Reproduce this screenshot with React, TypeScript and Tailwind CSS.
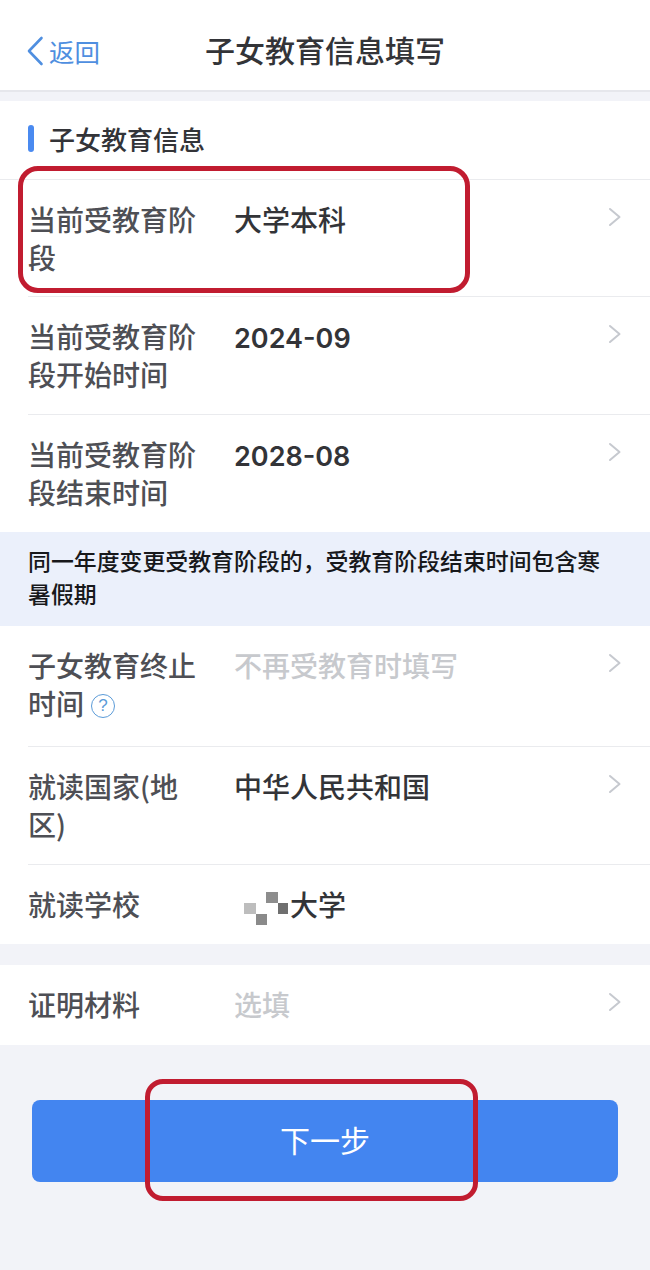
import React from 'react';

const FONT = "font-['Noto_Sans_CJK_SC','Noto_Sans',sans-serif]";

const Chevron = () => (
  <svg width="14" height="20" viewBox="0 0 14 20" fill="none" className="shrink-0">
    <path d="M2 2l9.5 8L2 18" stroke="#c6c9cf" strokeWidth="2" strokeLinecap="round" strokeLinejoin="round" />
  </svg>
);

const HelpIcon = () => (
  <span className="inline-flex ml-[7px] w-[24px] h-[24px] rounded-full border-[1.5px] border-[#5b9bd8] items-center justify-center align-[4px] text-[17px] leading-none text-[#5b9bd8] font-['Liberation_Sans',sans-serif]">
    ?
  </span>
);

// mosaic over the school name
const Mosaic = () => (
  <div className="grid grid-cols-[12px_10px_12px_10px] grid-rows-[11px_11px_11px] w-[54px] h-[33px] pl-[10px] mt-[7px] shrink-0 box-content">
    <div className="col-start-3 row-start-1 bg-[#8d8d8d]" />
    <div className="col-start-1 row-start-2 bg-[#bdbdbd]" />
    <div className="col-start-4 row-start-2 bg-[#6f6f6f]" />
    <div className="col-start-2 col-end-4 row-start-3 w-[11px] bg-[#8a8a8a]" />
  </div>
);

const Digits = ({ children }: { children: React.ReactNode }) => (
  <span className="font-['Inter',sans-serif] font-semibold text-[27px]">{children}</span>
);

interface RowProps {
  label: React.ReactNode;
  value: React.ReactNode;
  height: string;
  placeholder?: boolean;
  arrow?: boolean;
  border?: boolean;
}

const Row: React.FC<RowProps> = ({ label, value, height, placeholder, arrow = true, border = true }) => (
  <div className="pl-[28px]">
    <div className={`flex items-start pt-[20px] pr-[28px] ${height} ${border ? 'border-b border-[#eaebee]' : ''}`}>
      <div className="w-[206px] shrink-0 pr-[35px] text-[28px] leading-[38px] text-[#4e4f55] font-medium">{label}</div>
      <div className={`flex-1 text-[28px] leading-[38px] font-medium ${placeholder ? 'text-[#c7c9cd]' : 'text-[#333438]'}`}>{value}</div>
      {arrow && (
        <div className="pt-[7px]">
          <Chevron />
        </div>
      )}
    </div>
  </div>
);

export default function App() {
  return (
    <div className={`w-[650px] h-[1270px] bg-[#f2f3f8] overflow-hidden relative ${FONT}`}>
      <header className="h-[92px] bg-white border-b-2 border-[#e6e7ec] grid grid-cols-[1fr_auto_1fr] items-center pt-[12px]">
        <div className="flex items-center gap-[5px] pl-[26px]">
          <svg width="18" height="30" viewBox="0 0 18 30" fill="none">
            <path d="M15.5 2L3 15l12.5 13" stroke="#4f8fe0" strokeWidth="2.6" strokeLinecap="round" strokeLinejoin="round" />
          </svg>
          <span className="text-[25.5px] leading-[30px] text-[#4f8fe0] -mt-[1px]">返回</span>
        </div>
        <h1 className="text-[30px] leading-[40px] font-medium text-[#333438] -mt-[4px]">子女教育信息填写</h1>
        <div />
      </header>

      <section className="mt-[9px] bg-white">
        <div className="h-[79px] flex items-center pl-[28px] gap-[15px] border-b border-[#eaebee] pb-[3px]">
          <span className="w-[6px] h-[27px] rounded-full bg-[#4a8af0]" />
          <h2 className="text-[26px] leading-[34px] font-medium text-[#333438]">子女教育信息</h2>
        </div>
        <Row height="h-[117px]" label="当前受教育阶段" value="大学本科" />
        <Row height="h-[118px]" label="当前受教育阶段开始时间" value={<Digits>2024-09</Digits>} />
        <Row height="h-[117px]" border={false} label="当前受教育阶段结束时间" value={<Digits>2028-08</Digits>} />
      </section>

      <div className="h-[94px] bg-[#ebf0fb] px-[28px] pt-[12px] text-[22.9px] leading-[33px] font-medium text-[#17181b]">
        同一年度变更受教育阶段的，受教育阶段结束时间包含寒暑假期
      </div>

      <section className="bg-white">
        <Row
          height="h-[121px]"
          placeholder
          label={
            <>
              子女教育终止时间
              <HelpIcon />
            </>
          }
          value="不再受教育时填写"
        />
        <Row height="h-[118px]" label="就读国家(地区)" value="中华人民共和国" />
        <Row
          height="h-[79px]"
          border={false}
          arrow={false}
          label="就读学校"
          value={
            <div className="flex">
              <Mosaic />
              <span className="-ml-[8px]">大学</span>
            </div>
          }
        />
      </section>

      <section className="mt-[21px] bg-white">
        <Row height="h-[80px]" border={false} placeholder label="证明材料" value="选填" />
      </section>

      <div className="mt-[55px] px-[32px]">
        <button className="w-full h-[82px] rounded-[8px] bg-[#4385f0] text-white text-[30px] leading-[40px] pb-[5px]">下一步</button>
      </div>

      {/* red annotations drawn over the screenshot */}
      <div className="absolute left-[18px] top-[166px] w-[452px] h-[127px] rounded-[20px] border-[5px] border-[#c11c30]" />
      <div className="absolute left-[145px] top-[1079px] w-[333px] h-[122px] rounded-[18px] border-[5px] border-[#c11c30]" />
    </div>
  );
}
